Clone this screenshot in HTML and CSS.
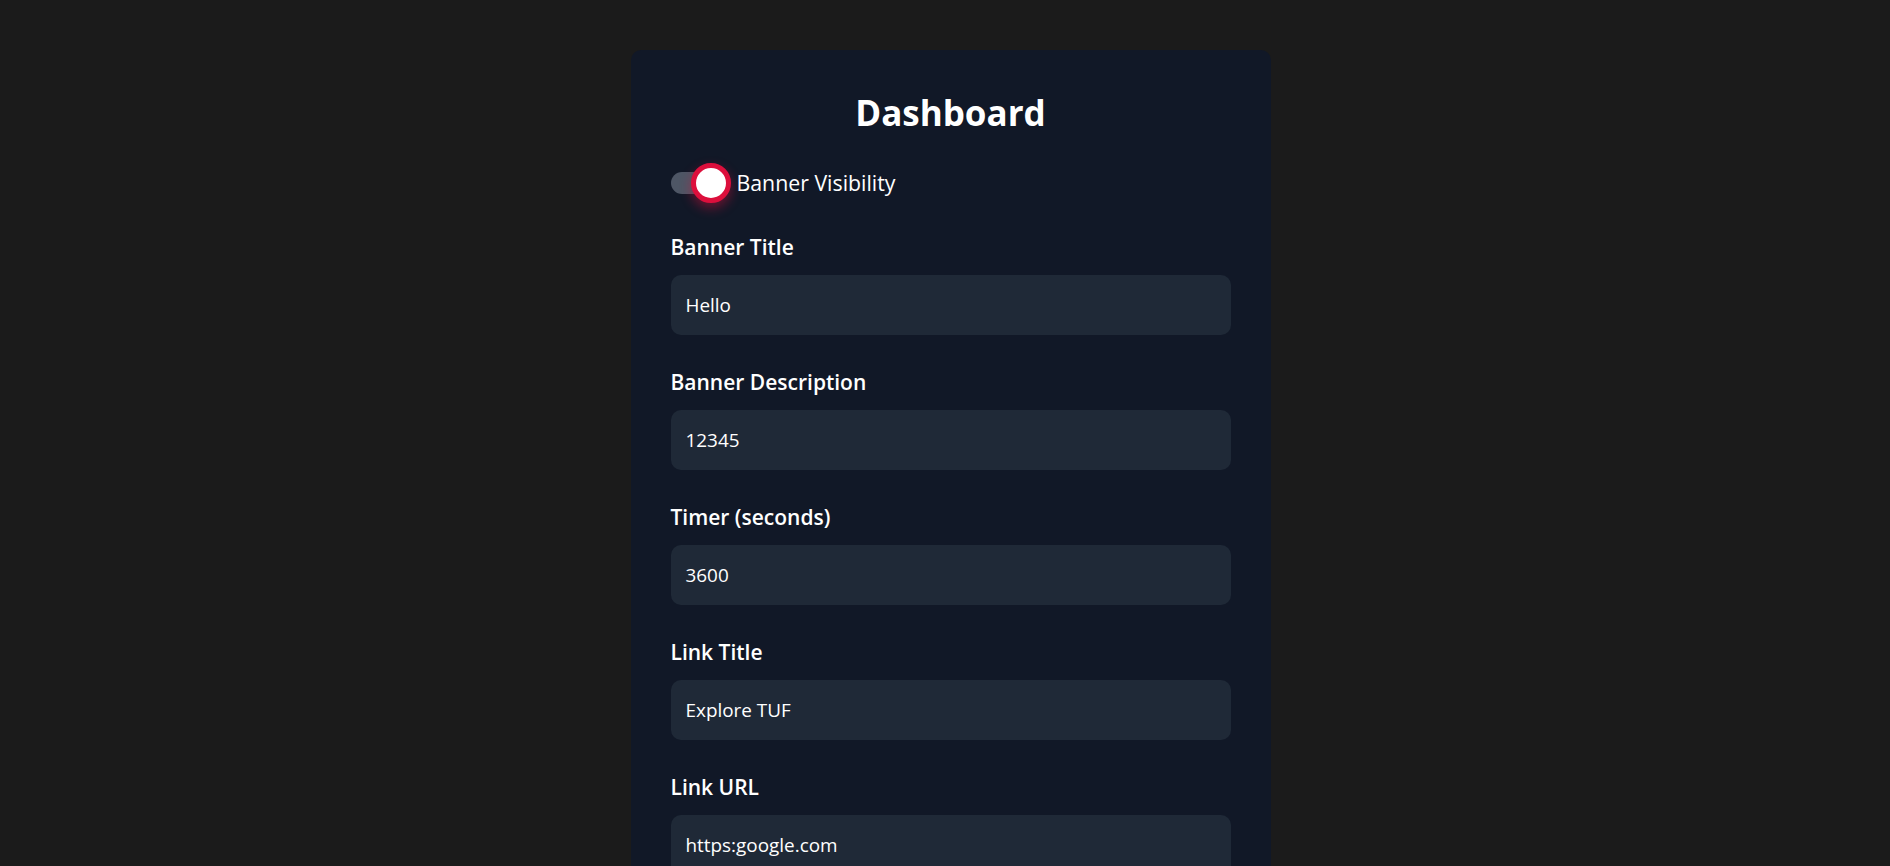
FILE: index.html
```html
<!DOCTYPE html>
<html lang="en">
<head>
<meta charset="utf-8">
<title>Dashboard</title>
<link rel="stylesheet" href="styles.css">
</head>
<body>
<main class="page">
  <section class="card">
    <h1 class="title">Dashboard</h1>
    <div class="toggle-row">
      <span class="toggle">
        <span class="track"></span>
        <span class="knob"></span>
      </span>
      <span class="toggle-label">Banner Visibility</span>
    </div>
    <div class="field">
      <label class="label">Banner Title</label>
      <div class="input">Hello</div>
    </div>
    <div class="field">
      <label class="label">Banner Description</label>
      <div class="input">12345</div>
    </div>
    <div class="field">
      <label class="label">Timer (seconds)</label>
      <div class="input">3600</div>
    </div>
    <div class="field">
      <label class="label">Link Title</label>
      <div class="input">Explore TUF</div>
    </div>
    <div class="field">
      <label class="label">Link URL</label>
      <div class="input">https:google.com</div>
    </div>
  </section>
</main>
</body>
</html>
```

FILE: styles.css
```css
html, body {
  margin: 0;
  padding: 0;
  height: 100%;
  overflow: hidden;
  background: #1b1b1b;
}
body {
  font-family: "Open Sans", "Noto Sans", sans-serif;
  color: #ffffff;
}
.page {
  display: flex;
  justify-content: center;
  padding-top: 50px;
  padding-left: 11px;
}
.card {
  width: 640px;
  box-sizing: border-box;
  padding: 40px 40px 10px;
  background: #111827;
  border-radius: 10px;
}
.title {
  margin: 0 0 30px;
  text-align: center;
  font-size: 35px;
  line-height: 45px;
  font-weight: 700;
}
.toggle-row {
  display: flex;
  align-items: center;
  height: 35px;
  margin-bottom: 30px;
  gap: 6px;
}
.toggle {
  position: relative;
  width: 60px;
  height: 35px;
  display: flex;
  align-items: center;
}
.track {
  width: 52px;
  height: 22px;
  border-radius: 11px;
  background: #4e5665;
}
.knob {
  position: absolute;
  left: 20px;
  top: -2px;
  width: 30px;
  height: 30px;
  border-radius: 50%;
  background: #ffffff;
  border: 5px solid #dc0f3c;
  box-shadow: 0 5px 12px rgba(220, 15, 60, 0.45);
}
.toggle-label {
  font-size: 21.3px;
  line-height: 35px;
}
.field {
  margin-bottom: 30px;
}
.label {
  display: block;
  font-size: 21px;
  line-height: 35px;
  font-weight: 600;
  margin-bottom: 10px;
}
.input {
  box-sizing: border-box;
  height: 60px;
  padding: 15px;
  font-size: 18.9px;
  line-height: 30px;
  background: #1f2937;
  border-radius: 10px;
}
```
